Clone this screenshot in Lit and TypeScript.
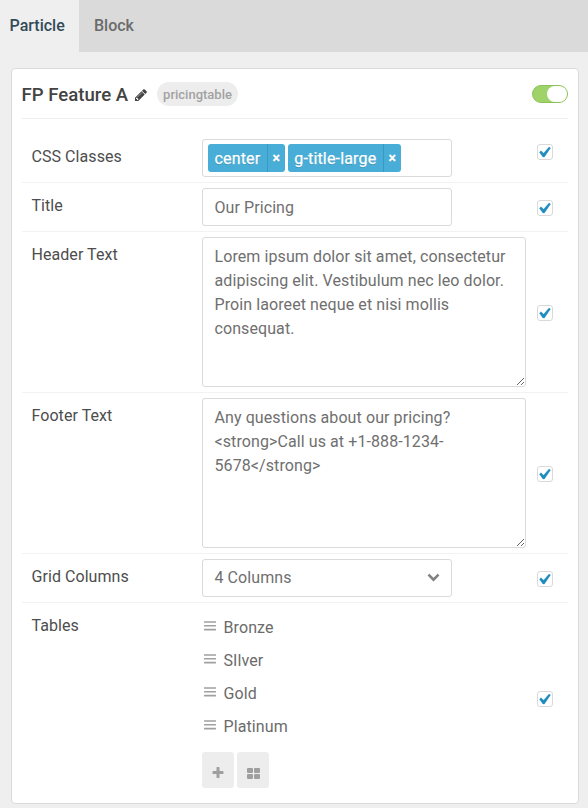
import { LitElement, html, css, svg } from "lit";
import { customElement } from "lit/decorators.js";

const PENCIL = "M363 1408l91-91-235-235-91 91v107h128v128h107zM886 480q0-22-22-22-10 0-17 7l-542 542q-7 7-7 17 0 22 22 22 10 0 17-7l542-542q7-7 7-17zM832 288l416 416-832 832h-416v-416zM1515 384q0 53-37 90l-166 166-416-416 166-165q36-38 90-38 53 0 91 38l235 234q37 39 37 91z";
const CHECK = "M14.83 4.89l1.34.94-5.81 8.38H9.02L5.78 9.67l1.34-1.25 2.57 2.4z";
const CHEVRON = "M1683 808l-742 741q-19 19-45 19t-45-19l-742-741q-19-19-19-45.5t19-45.5l166-165q19-19 45-19t45 19l531 531 531-531q19-19 45-19t45 19l166 165q19 19 19 45.5t-19 45.5z";
const PLUS = "M1600 736v192q0 40-28 68t-68 28h-416v416q0 40-28 68t-68 28h-192q-40 0-68-28t-28-68v-416h-416q-40 0-68-28t-28-68v-192q0-40 28-68t68-28h416v-416q0-40 28-68t68-28h192q40 0 68 28t28 68v416h416q40 0 68 28t28 68z";

const HEADER_TEXT = "Lorem ipsum dolor sit amet, consectetur adipiscing elit. Vestibulum nec leo dolor. Proin laoreet neque et nisi mollis consequat.";
const FOOTER_TEXT = "Any questions about our pricing? <strong>Call us at +1-888-1234-5678</strong>";

@customElement("app-root")
export class AppRoot extends LitElement {
  static styles = css`
    :host { display: block; height: 808px; overflow: hidden; background: #efefef; font: 16px/24px Roboto, sans-serif; color: #4d4d4d; }
    * { box-sizing: border-box; }
    svg { display: block; fill: currentColor; flex: none; }
    .tabs { display: flex; height: 52px; background: #dadada; font-weight: 500; color: #6b6b6b; }
    .tab { padding: 14px 15px 0; }
    .tab.active { width: 79px; padding-left: 9.5px; padding-right: 0; background: #efefef; color: #314c59; }
    .card { margin: 16px 9px 0 11px; height: 736px; background: #fff; border: 1px solid #dadada; border-radius: 4px; padding: 0 10px; }
    .head { display: flex; align-items: center; height: 50px; border-bottom: 1px solid #ededed; }
    .title { font-size: 18.6px; font-weight: 500; color: #434343; white-space: nowrap; width: 106px; padding-top: 3px; margin-left: -0.5px; }
    .pencil { margin: 3px 0 0 7px; color: #434343; }
    .badge { margin-left: 10.5px; width: 81px; height: 24px; border-radius: 12px; background: #ededed; color: #a2a2a2; font-size: 13px; font-weight: 500; text-align: center; line-height: 25px; }
    .toggle { margin-left: auto; width: 36px; height: 18px; border-radius: 9px; background: #9fd36a; border: 1px solid #8cc257; display: flex; justify-content: flex-end; }
    .knob { width: 20px; height: 16px; border-radius: 8px; background: #fff; }
    .row { display: flex; border-bottom: 1px solid #f2f2f2; padding: 5px 15px 5px 10px; }
    .row.first { margin-top: 15px; }
    .row.last { border: 0; height: 200px; }
    .label { width: 170px; padding-top: 6px; flex: none; text-indent: -0.5px; letter-spacing: 0.06px; }
    .check { margin-left: auto; margin-top: 1px; align-self: center; width: 16px; height: 16px; border: 1px solid #d9d9d9; border-radius: 3px; display: flex; align-items: center; justify-content: center; color: #1e8cbe; }
    .check svg { stroke: currentColor; stroke-width: 0.4; }
    .check.raised { align-self: flex-start; margin-top: 5px; }
    .check.lower { margin-top: 2px; }
    .last .check { margin-top: -8px; }
    .field { width: 250px; height: 38px; border: 1px solid #dadada; border-radius: 3px; color: #6f6f6f; padding: 6px 11px 6px 11.5px; letter-spacing: 0.08px; display: flex; align-items: center; justify-content: space-between; }
    .field.text { padding-top: 8px; }
    .field.tags { padding: 0 5px; justify-content: flex-start; gap: 3px; letter-spacing: 0; }
    .tag { display: flex; height: 28px; border-radius: 3px; background: #48aed7; color: #fff; line-height: 29px; text-shadow: 0 1px 0 rgba(0, 51, 83, 0.3); -webkit-text-stroke: 0.25px #fff; letter-spacing: 0.16px; }
    .tag .name { padding: 0 6.5px; white-space: nowrap; }
    .tag .remove { width: 18px; border-left: 1px solid #3899c2; text-align: center; font-size: 14px; font-weight: 700; }
    textarea { display: block; width: 324px; height: 150px; border: 1px solid #dadada; border-radius: 3px; padding: 7px 11.5px; margin: 0; outline: 0; font: inherit; letter-spacing: 0.09px; color: #6f6f6f; background: #fff; resize: both; overflow: auto; }
    .arrow { color: #828282; padding-bottom: 3px; }
    .items { padding-top: 3px; color: #6b6b6b; letter-spacing: 0.1px; }
    .item { display: flex; align-items: center; gap: 7.5px; height: 33px; padding-left: 2px; }
    .item svg { color: #a0a0a0; margin-bottom: 3px; }
    .buttons { display: flex; gap: 3px; margin-top: 9px; }
    .btn { width: 32px; height: 36px; border-radius: 3px; background: #ededed; color: #9f9f9f; display: flex; align-items: center; justify-content: center; padding: 5px 1px 0 0; }
    .btn.grid { padding: 6px 0 0 1px; }
  `;

  icon(d: string, size: number, box = "0 0 1792 1792") {
    return html`<svg width=${size} height=${size} viewBox=${box}>${svg`<path d=${d}></path>`}</svg>`;
  }

  check(kind = "") {
    return html`<div class="check ${kind}">${this.icon(CHECK, 12, "5.26 3.83 11.43 11.43")}</div>`;
  }

  tag(name: string) {
    return html`<div class="tag"><span class="name">${name}</span><span class="remove">×</span></div>`;
  }

  render() {
    return html`
      <nav class="tabs"><div class="tab active">Particle</div><div class="tab">Block</div></nav>
      <section class="card">
        <header class="head">
          <span class="title">FP Feature A</span>
          <span class="pencil">${this.icon(PENCIL, 12, "0 0 1536 1536")}</span>
          <span class="badge">pricingtable</span>
          <div class="toggle"><div class="knob"></div></div>
        </header>
        <div class="row first"><div class="label">CSS Classes</div>
          <div class="field tags">${this.tag("center")}${this.tag("g-title-large")}</div>${this.check("raised")}</div>
        <div class="row"><div class="label">Title</div><div class="field text">Our Pricing</div>${this.check("lower")}</div>
        <div class="row"><div class="label">Header Text</div><textarea .value=${HEADER_TEXT}></textarea>${this.check("lower")}</div>
        <div class="row"><div class="label">Footer Text</div><textarea .value=${FOOTER_TEXT}></textarea>${this.check("lower")}</div>
        <div class="row"><div class="label">Grid Columns</div>
          <div class="field">4 Columns<span class="arrow">${this.icon(CHEVRON, 13)}</span></div>${this.check("lower")}</div>
        <div class="row last"><div class="label">Tables</div>
          <div class="items">
            ${["Bronze", "SIlver", "Gold", "Platinum"].map((n) => html`<div class="item">
              <svg width="12" height="10" viewBox="0 0 12 10"><rect y=".2" width="12" height="1.6" rx=".4"></rect><rect y="4" width="12" height="1.6" rx=".4"></rect><rect y="7.8" width="12" height="1.6" rx=".4"></rect></svg>${n}</div>`)}
            <div class="buttons">
              <div class="btn">${this.icon(PLUS, 14)}</div>
              <div class="btn grid"><svg width="13" height="11" viewBox="0 0 13 11"><rect width="6" height="5" rx="1"></rect><rect x="7" width="6" height="5" rx="1"></rect><rect y="6" width="6" height="5" rx="1"></rect><rect x="7" y="6" width="6" height="5" rx="1"></rect></svg></div>
            </div>
          </div>${this.check()}</div>
      </section>`;
  }
}
